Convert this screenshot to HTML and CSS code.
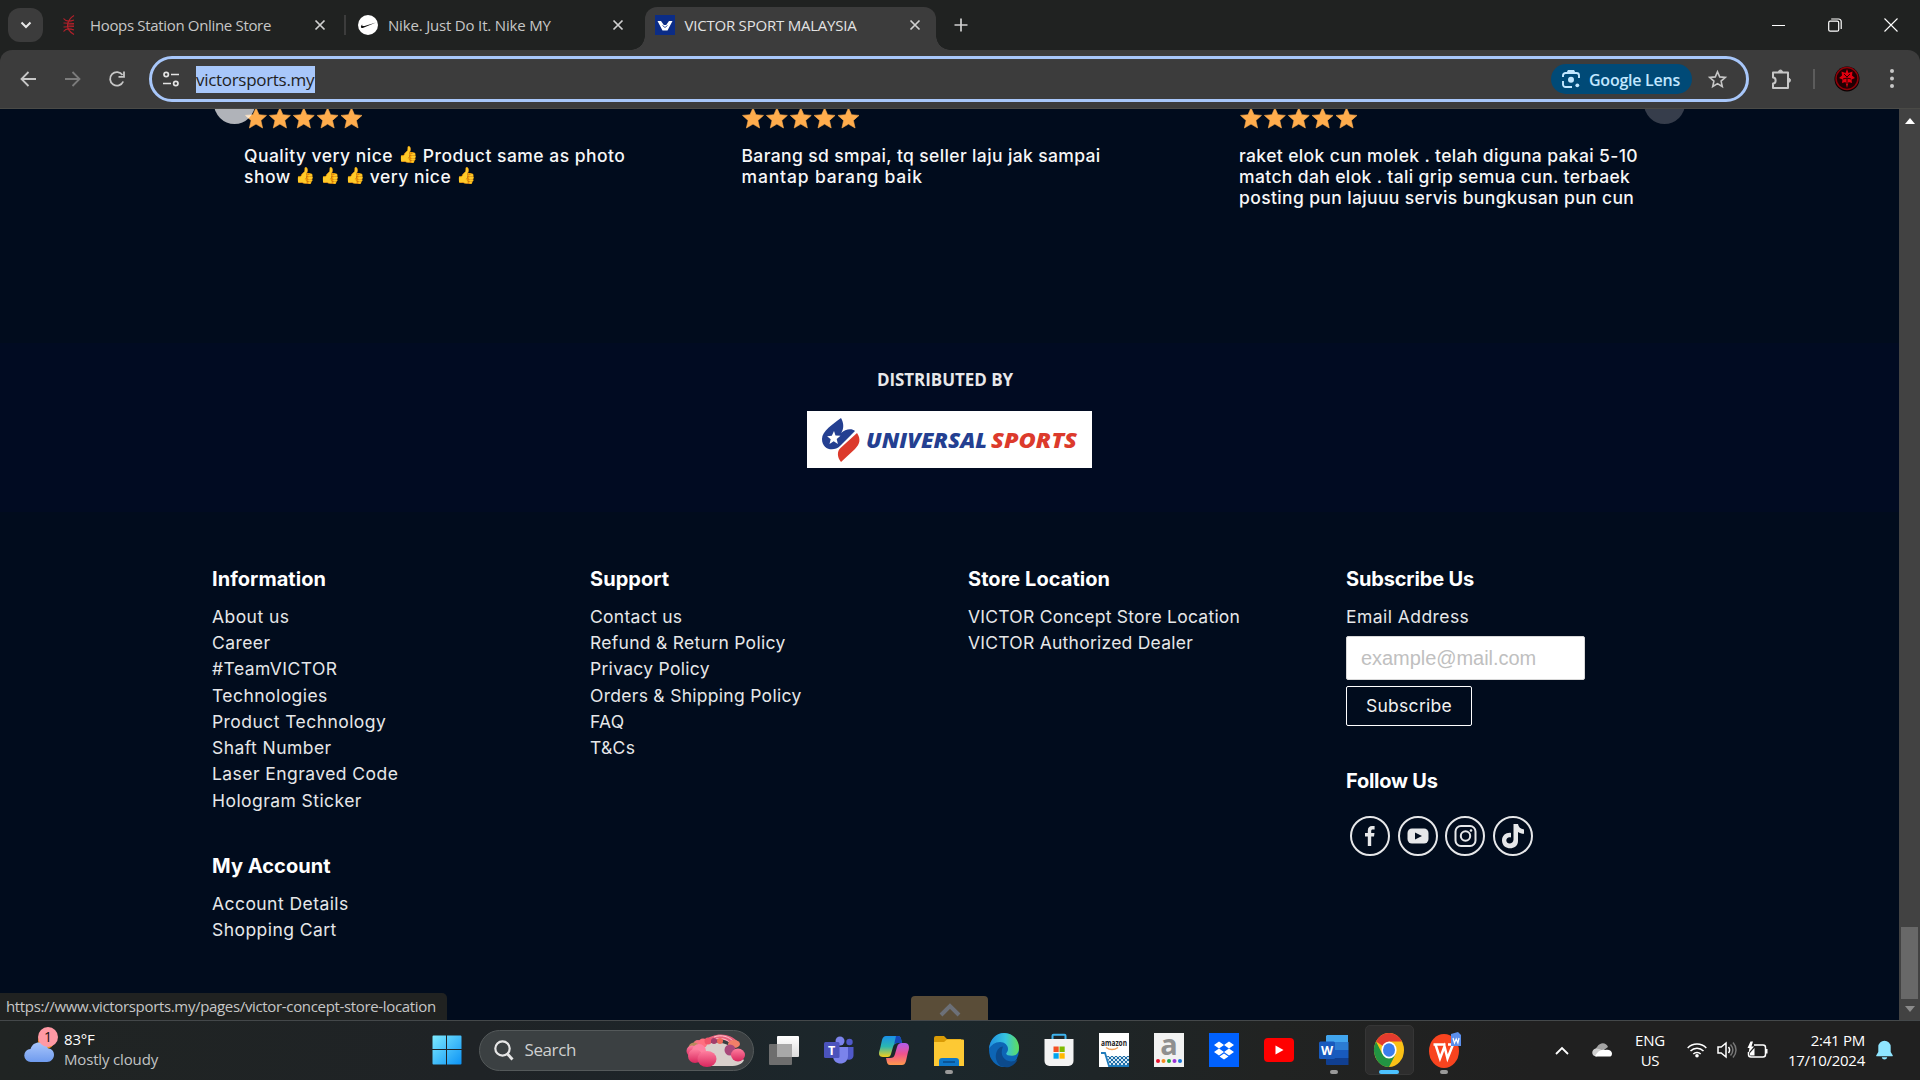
FILE: index.html
```html
<!DOCTYPE html>
<html lang="en">
<head>
<meta charset="utf-8">
<title>VICTOR SPORT MALAYSIA</title>
<link rel="stylesheet" href="styles.css">
</head>
<body>
<svg class="defs" aria-hidden="true">
  <defs>
    <symbol id="star" viewBox="0 0 22 22"><path d="M11 .8l3 6.9 7.5.7-5.6 5 1.7 7.6-6.6-3.9L4.4 21l1.7-7.6-5.6-5L8 7.7z" fill="#ffad4d" stroke="#ffad4d" stroke-width=".6" stroke-linejoin="round"/></symbol>
    <symbol id="stars" viewBox="0 0 118 22"><use href="#star" x="0" width="22" height="22"/><use href="#star" x="23.9" width="22" height="22"/><use href="#star" x="47.8" width="22" height="22"/><use href="#star" x="71.6" width="22" height="22"/><use href="#star" x="95.5" width="22" height="22"/></symbol>
    <symbol id="close" viewBox="0 0 12 12"><path d="M1.5 1.5l9 9m0-9l-9 9" stroke="#d0d0d0" stroke-width="1.7"/></symbol>
  </defs>
</svg>
<div class="screen">
  <header class="tabstrip">
    <button class="tab-search"><svg width="14" height="14" viewBox="0 0 14 14"><path d="M2.5 4.5L7 9l4.500-4.500" fill="none" stroke="#e8e8e8" stroke-width="2"/></svg></button>
    <div class="tab tab-first">
      <svg class="favicon" viewBox="0 0 12 20" fill="none" stroke="#b3202a" stroke-width="1.200"><path d="M11 .5C7 3 5 6 4.500 10S7 17 11 19.500M11 5C6 7 3 7 .5 3.500M11 8.500L.5 8m10.500 3.500l-10.500.5M11 15c-5-2-8-2-10.500 1.500M4 10h7"/></svg>
      <span class="tab-title">Hoops Station Online Store</span>
      <svg class="tab-close"><use href="#close"/></svg>
    </div>
    <div class="tab tab-second">
      <svg class="favicon" viewBox="0 0 20 20"><circle cx="10" cy="10" r="10" fill="#fff"/><path d="M4.200 9.200c-2 2.300-1.800 4.600 1.200 3.500L18 7.500 6.500 11c-1.900.4-2.600-.3-2.300-1.800z" fill="#111"/></svg>
      <span class="tab-title">Nike. Just Do It. Nike MY</span>
      <svg class="tab-close"><use href="#close"/></svg>
    </div>
    <div class="tab tab-active">
      <svg class="favicon" viewBox="0 0 20 20"><path fill="#0b2c86" d="M0 0h20v20H0z"/><path d="M2.500 6H6l2.800 4h2.400L14 6h3.500l-5 9.500h-5z" fill="#fff"/><path d="M7.500 10.500l2.500 2 2.500-2" fill="none" stroke="#0b2c86" stroke-width=".8"/></svg>
      <span class="tab-title">VICTOR SPORT MALAYSIA</span>
      <svg class="tab-close"><use href="#close"/></svg>
    </div>
    <svg class="new-tab" width="14" height="14" viewBox="0 0 14 14"><path d="M7 .5v13M.5 7h13" stroke="#d0d0d0" stroke-width="1.700"/></svg>
    <div class="window-controls">
      <svg width="14" height="14" viewBox="0 0 14 14"><path d="M0 7.500h13" stroke="#fff"/></svg>
      <svg width="14" height="14" viewBox="0 0 14 14" fill="none" stroke="#fff" stroke-width="1.200"><rect x=".7" y="3.200" width="10" height="10" rx="1.500"/><path d="M3.200 1h7.300a2.500 2.500 0 0 1 2.700 2.500V11"/></svg>
      <svg width="14" height="14" viewBox="0 0 14 14"><path d="M.5.5l13 13m0-13l-13 13" stroke="#fff" stroke-width="1.100"/></svg>
    </div>
  </header>
  <nav class="toolbar">
    <div class="nav-buttons">
      <svg width="16" height="16" viewBox="0 0 16 16" fill="none" stroke="#c7c7c7" stroke-width="1.800"><path d="M16 8H2M8.500 1L1.500 8l7 7"/></svg>
      <svg width="16" height="16" viewBox="0 0 16 16" fill="none" stroke="#7c7c7c" stroke-width="1.800"><path d="M0 8h14M7.500 1l7 7-7 7"/></svg>
      <svg width="16" height="16" viewBox="0 0 16 16" fill="none" stroke="#c7c7c7" stroke-width="1.800"><path d="M14.200 10.500A6.800 6.800 0 1 1 13.500 4M15 .5v5.300H9.500"/></svg>
    </div>
    <div class="omnibox">
      <svg class="tune" width="16" height="16" viewBox="0 0 16 16" fill="none" stroke="#e3e3e3" stroke-width="1.700"><circle cx="3.200" cy="3.500" r="2.200"/><path d="M8 3.500h8M0 12.500h8"/><circle cx="12.800" cy="12.500" r="2.200"/></svg>
      <span class="url">victorsports.my</span>
      <div class="lens">
        <svg width="18" height="18" viewBox="0 0 18 18" fill="none" stroke="#c2e7ff" stroke-width="1.900"><path d="M1 7V5.500A2.500 2.500 0 0 1 3.500 3h11A2.500 2.500 0 0 1 17 5.500V8M1 11v3.500A2.500 2.500 0 0 0 3.500 17H10M5.500 3l1-2h5l1 2"/><circle cx="9" cy="9.800" r="3" fill="#c2e7ff" stroke="none"/><circle cx="15.300" cy="15.300" r="1.900" fill="#c2e7ff" stroke="none"/></svg>
        <span>Google Lens</span>
      </div>
      <svg class="bookmark" width="19" height="18" viewBox="0 0 19 18"><path d="M9.500 1.800l2.200 5.100 5.600.5-4.200 3.700 1.200 5.400-4.800-2.900-4.800 2.900 1.200-5.400L1.700 7.400l5.600-.5z" fill="none" stroke="#c7c7c7" stroke-width="1.600"/></svg>
    </div>
    <svg class="extensions" width="21" height="21" viewBox="0 0 21 21"><path d="M2 3.500h15v15.500H2v-4.500c3.500 0 3.500-6 0-6z" fill="none" stroke="#c7c7c7" stroke-width="2" stroke-linejoin="round"/><path d="M7.500 3a2 2 0 0 1 4 0zM17.500 9.300a2 2 0 0 1 0 4z" fill="#c7c7c7" stroke="#c7c7c7"/></svg>
    <span class="toolbar-divider"></span>
    <svg class="avatar" width="26" height="26" viewBox="0 0 26 26"><circle cx="13" cy="13" r="12.500" fill="#0a0002"/><circle cx="13" cy="12.500" r="11" fill="#210003" stroke="#8c0008" stroke-width="1.500"/><path d="M13 3l1.500 4 4-1.500-.5 4 3 2.500-3.500 1.500.5 3.500-3.500-1L13 22l-1.500-6-3.500 1 .5-3.500L5 12l3-2.500-.5-4 4 1.500z" fill="#e0000f"/><path d="M10 8l3 3 3-3M9 13l4-1 4 1M13 12v6" fill="none" stroke="#310003"/></svg>
    <svg class="kebab" width="4" height="20" viewBox="0 0 4 20" fill="#c7c7c7"><circle cx="2" cy="2" r="2"/><circle cx="2" cy="9.500" r="2"/><circle cx="2" cy="17" r="2"/></svg>
  </nav>
  <div class="viewport">
    <main class="page">
      <section class="reviews">
        <article class="review">
          <svg class="rating"><use href="#stars"/></svg>
          <p class="review-emoji">Quality very nice <i>👍</i> Product same as photo<br>show <i>👍</i> <i>👍</i> <i>👍</i> very nice <i>👍</i></p>
        </article>
        <article class="review">
          <svg class="rating"><use href="#stars"/></svg>
          <p>Barang sd smpai, tq seller laju jak sampai<br><span class="spaced">mantap barang baik</span></p>
        </article>
        <article class="review">
          <svg class="rating"><use href="#stars"/></svg>
          <p>raket elok cun molek . telah diguna pakai 5-10<br>match dah elok . tali grip semua cun. terbaek<br>posting pun lajuuu servis bungkusan pun cun</p>
        </article>
        <span class="slide slide-prev"></span>
        <span class="slide slide-next"></span>
      </section>
      <section class="distributor">
        <p>DISTRIBUTED BY</p>
        <svg class="brand" width="285" height="57" viewBox="0 0 285 57">
          <path fill="#fff" d="M0 0h285v57H0z"/>
          <path d="M34 7c3 5 3 11 0 15 4-4 11-5 14-2L33 35c-6 6-18 4-18-7 0-8 11-15 19-21z" fill="#243f91"/>
          <path d="M50 22c4 6 3 11-2 16L34 51c-4-5-4-11-.5-14z" fill="#dc3a2c"/>
          <path d="M27 20l1.500 4.400 5 .3-3.800 3.200 1.200 5-4.200-2.600-4.200 2.800 1.200-4.900-3.600-2.900 4.700-.6z" fill="#fff"/>
          <text class="brand-text" x="59" y="37" textLength="121" lengthAdjust="spacingAndGlyphs" fill="#243f91">UNIVERSAL</text>
          <text class="brand-text" x="184" y="37" textLength="86" lengthAdjust="spacingAndGlyphs" fill="#dc3a2c">SPORTS</text>
        </svg>
      </section>
      <footer class="footer">
        <div class="footer-col">
          <h3>Information</h3>
          <ul><li>About us</li><li>Career</li><li>#TeamVICTOR</li><li>Technologies</li><li>Product Technology</li><li>Shaft Number</li><li>Laser Engraved Code</li><li>Hologram Sticker</li></ul>
          <h3 class="second">My Account</h3>
          <ul><li>Account Details</li><li>Shopping Cart</li></ul>
        </div>
        <div class="footer-col">
          <h3>Support</h3>
          <ul class="policy"><li>Contact us</li><li>Refund &amp; Return Policy</li><li>Privacy Policy</li><li>Orders &amp; Shipping Policy</li><li>FAQ</li><li>T&amp;Cs</li></ul>
        </div>
        <div class="footer-col">
          <h3>Store Location</h3>
          <ul class="tight"><li>VICTOR Concept Store Location</li><li>VICTOR Authorized Dealer</li></ul>
        </div>
        <div class="footer-col">
          <h3 class="close-set">Subscribe Us</h3>
          <label>Email Address</label>
          <input class="email" placeholder="example@mail.com">
          <button class="subscribe">Subscribe</button>
          <h3 class="follow">Follow Us</h3>
          <div class="social">
            <svg viewBox="0 0 40 40"><circle cx="20" cy="20" r="19"/><path d="M17.800 30V20.500H15V17h2.800v-2.500c0-3 1.700-4.500 4.200-4.500h2.600v3.600h-1.800c-1.300 0-1.600.6-1.600 1.600V17h3.300l-.5 3.500h-2.800V30z" class="solid"/></svg>
            <svg viewBox="0 0 40 40"><circle cx="20" cy="20" r="19"/><rect x="9.500" y="12.500" width="21" height="15" rx="4.500" class="solid"/><path d="M17 16.500l7 3.500-7 3.500z" class="hole"/></svg>
            <svg viewBox="0 0 40 40"><circle cx="20" cy="20" r="19"/><rect x="10.500" y="10" width="20" height="20" rx="5.500"/><circle cx="20.500" cy="20" r="4.700"/><circle cx="26" cy="14.500" r="1.300" class="solid"/></svg>
            <svg viewBox="0 0 40 40"><circle cx="20" cy="20" r="19"/><path d="M20.500 8H25c.4 3 2.500 5 6 5.500v4.300c-2.400 0-4.300-.7-6-1.800v9c0 9.500-15.500 10-16-.3 0-5.500 4-8.400 9-7.800v4.600c-3-.6-4.700.8-4.700 3.100.3 4.400 7.200 3.700 7.200-1z" class="solid"/></svg>
          </div>
        </div>
      </footer>
      <div class="to-top"><svg width="22" height="14" viewBox="0 0 22 14"><path d="M2 12l9-9 9 9" fill="none" stroke="#6c7078" stroke-width="4"/></svg></div>
      <div class="status">https://www.victorsports.my/pages/victor-concept-store-location</div>
    </main>
    <aside class="scrollbar">
      <svg width="10" height="6" viewBox="0 0 10 6"><path d="M5 0l5 6H0z" fill="#fff"/></svg>
      <span class="thumb"></span>
      <svg width="10" height="6" viewBox="0 0 10 6"><path d="M5 6l5-6H0z" fill="#8b8b8b"/></svg>
    </aside>
  </div>
  <div class="taskbar">
    <div class="weather">
      <svg width="34" height="38" viewBox="0 0 34 38">
        <defs><linearGradient id="cl" x2="0" y2="1"><stop offset="0" stop-color="#a9c6fb"/><stop offset="1" stop-color="#6f9bee"/></linearGradient></defs>
        <circle cx="22" cy="15" r="8" fill="#f08a1c"/><path d="M7 36a6.500 6.500 0 0 1-.5-13C8 18 12 16 16 16.500c4 .5 7 3 8 6 4 0 6 3 6 6.500S27 36 23 36z" fill="url(#cl)"/><circle cx="24" cy="11" r="10" fill="#ff99a4"/><text x="24" y="16" text-anchor="middle" class="badge-text">1</text></svg>
      <div class="weather-text"><span>83°F</span><span class="dim">Mostly cloudy</span></div>
    </div>
    <div class="dock">
      <div class="cell"><svg width="30" height="30" viewBox="0 0 30 30"><defs><linearGradient id="wn" x2="1" y2="1"><stop offset="0" stop-color="#7deaff"/><stop offset="1" stop-color="#0c93f5"/></linearGradient></defs><path d="M1.500.5h12.500V14H.5V1.500a1 1 0 0 1 1-1zM15 .5h13.500a1 1 0 0 1 1 1V14H15zM.5 15H14v14.500H1.500a1 1 0 0 1-1-1zM15 15h14.500v13.500a1 1 0 0 1-1 1H15z" fill="url(#wn)"/></svg></div>
      <div class="search">
        <svg width="20" height="21" viewBox="0 0 20 21" fill="none" stroke="#e6e6e6" stroke-width="2.200"><circle cx="8.500" cy="8.500" r="7.200"/><path d="M13.500 14l5 5.500" stroke-width="2.800"/></svg>
        <span>Search</span>
        <svg class="flowers" width="60" height="34" viewBox="0 0 60 34">
          <defs><linearGradient id="pk" x2="0" y2="1"><stop offset="0" stop-color="#ff7f9f"/><stop offset="1" stop-color="#d9275e"/></linearGradient></defs>
          <path d="M16 12c14-5 30-3 36 10l6 5c-2 4-6 6-14 6H22z" fill="#d9cfcb"/>
          <path d="M18 8C28-1 44-1 53 10l-6 2C40 5 28 5 20 11z" fill="#e8617c"/><path d="M28 4c8-3 15 0 19 4M26 7c8-3 15-1 18 3" stroke="#ffc3cc" fill="none"/>
          <circle cx="12" cy="12" r="5" fill="#f4747f"/><circle cx="8" cy="15" r="5.500" fill="#b98a5c"/><circle cx="17" cy="10" r="4.500" fill="#ff6f7f"/><circle cx="22" cy="8" r="3.500" fill="#f0556a"/><circle cx="28" cy="8" r="3" fill="#a23d6b"/><circle cx="34" cy="8" r="3" fill="#ee6a58"/><ellipse cx="48" cy="11" rx="6" ry="4" fill="#f27f68"/>
          <circle cx="6" cy="18" r="5.500" fill="url(#pk)"/><circle cx="13" cy="18" r="7" fill="#ff80a0"/><circle cx="9" cy="23" r="7" fill="url(#pk)"/><ellipse cx="21" cy="26" rx="9.500" ry="8" fill="url(#pk)"/><circle cx="44" cy="17" r="5.500" fill="#a9487a"/><ellipse cx="52" cy="22" rx="7" ry="6.500" fill="url(#pk)"/>
        </svg>
      </div>
      <div class="cell"><svg width="30" height="29" viewBox="0 0 30 29"><defs><linearGradient id="tv" x2="0" y2="1"><stop offset="0" stop-color="#fff"/><stop offset="1" stop-color="#dcdcdc"/></linearGradient></defs><rect x="8" width="22" height="21" rx="1" fill="url(#tv)"/><rect y="8" width="23" height="21" rx="1" fill="#6e6e6e"/><path d="M8 8h15v13H8z" fill="#a8a8a8"/></svg></div>
      <div class="cell"><svg width="30" height="28" viewBox="0 0 30 28"><circle cx="16" cy="5" r="4.500" fill="#7b83eb"/><circle cx="25.500" cy="6" r="3.200" fill="#5059c9"/><path d="M20 11h9.500v8c0 6-8 6-9.500 2z" fill="#5059c9"/><path d="M9 11h15v9c0 10-15 10-15 0z" fill="#7b83eb"/><rect y="6" width="15.500" height="16" rx="1.500" fill="#4b53bc"/><text x="7.700" y="18.500" class="glyph" text-anchor="middle">T</text></svg></div>
      <div class="cell"><svg width="30" height="29" viewBox="0 0 30 29"><defs><linearGradient id="c1" x2="0" y2="1"><stop offset="0" stop-color="#1a8fe8"/><stop offset=".5" stop-color="#2bb7b0"/><stop offset="1" stop-color="#f5d01c"/></linearGradient><linearGradient id="c2" x2="0" y2="1"><stop offset="0" stop-color="#b05cf0"/><stop offset=".5" stop-color="#f0528c"/><stop offset="1" stop-color="#ff9a4c"/></linearGradient></defs><path d="M7 0h12c3 0 3 3 4 7h-4c-3 0-4 1-5 4l-2 7c-1 3-2 3-5 3H4c-4 0-5-3-3-8L3 4c1-3 2-4 4-4z" fill="url(#c1)"/><path d="M17 0h2c3 0 3 3 4 7h-4c-2 0-3 0-4 2z" fill="#1546b8"/><path d="M23 29H11c-3 0-3-3-4-7h4c3 0 4-1 5-4l2-7c1-3 2-4 5-4h3c4 0 5 4 3 9l-2 9c-1 3-2 4-4 4z" fill="url(#c2)"/></svg></div>
      <div class="cell running"><svg width="30" height="31" viewBox="0 0 30 31"><path d="M0 3a2 2 0 0 1 2-2h8l3 3H27l1 3H0z" fill="#d99b06"/><path d="M0 7h10l3-2.500h16a1 1 0 0 1 1 1V31H0z" fill="#fdc934"/><path d="M5 31v-5a3 3 0 0 1 3-3h14a3 3 0 0 1 3 3v5z" fill="#0f78c9"/><path d="M9 27h12" stroke="#0a4a86" stroke-width="1.500"/></svg></div>
      <div class="cell"><svg width="30" height="34" viewBox="0 0 30 30" preserveAspectRatio="none"><defs><linearGradient id="e1" x2="1"><stop offset="0" stop-color="#1f8fe0"/><stop offset=".55" stop-color="#36c3e0"/><stop offset="1" stop-color="#5fdf5a"/></linearGradient></defs><circle cx="15" cy="15" r="15" fill="#0d65b5"/><path d="M0 14C1 5 8 0 15 0c9 0 15 6 15 13 0 5-3 7-7 7-5 0-7-1-5-3 3-4-1-9-7-9-5 0-9 3-11 6z" fill="url(#e1)"/><path d="M11 29C3 22 8 12 14 12c-4 8 2 14 10 13 2-.3 3-1 4.500-1.500C24 31 17 31 11 29z" fill="#0c4a8c"/></svg></div>
      <div class="cell"><svg width="30" height="34" viewBox="0 0 30 34"><path d="M8.500 8V2.800a1 1 0 0 1 1-1h11a1 1 0 0 1 1 1V8" fill="none" stroke="#3fb4ee" stroke-width="2"/><path d="M.5 6h29v22a5 5 0 0 1-5 5h-19a5 5 0 0 1-5-5z" fill="#f3f3f3"/><path d="M9.500 13.500h5.200v5.500H9.500z" fill="#f25022"/><path d="M15.500 13.500h5.200v5.500h-5.200z" fill="#7fba00"/><path d="M9.500 20.200h5.200v5.500H9.500z" fill="#00a4ef"/><path d="M15.500 20.200h5.200v5.500h-5.200z" fill="#ffb900"/></svg></div>
      <div class="cell"><svg width="30" height="34" viewBox="0 0 30 34"><defs><pattern id="ck" width="4" height="4" patternUnits="userSpaceOnUse"><path fill="#1f6da6" d="M0 0h4v4H0z"/><path fill="#d3e6f2" d="M0 0h2v2H0zM2 2h2v2H2z"/></pattern></defs><path fill="#fff" d="M0 0h30v34H0z"/><text x="2" y="13" class="amz" textLength="26" lengthAdjust="spacingAndGlyphs">amazon</text><path d="M7 14.500c4 2.800 8 2.800 12 0" fill="none" stroke="#f2a057" stroke-width="1.500"/><path d="M8 23h22v9H11z" fill="url(#ck)"/><path d="M2 20h4l4 13h20" fill="none" stroke="#1f7cbc" stroke-width="1.800"/></svg></div>
      <div class="cell"><svg width="30" height="34" viewBox="0 0 30 34"><path fill="#f2f2f2" d="M0 0h30v34H0z"/><text x="15" y="22" text-anchor="middle" class="big-a">a</text><g><circle cx="4" cy="28" r="2" fill="#e8112d"/><circle cx="9.500" cy="28" r="2" fill="#f58a1f"/><circle cx="15" cy="28" r="2" fill="#1ba84a"/><circle cx="20.500" cy="28" r="2" fill="#9b30d9"/><circle cx="26" cy="28" r="2" fill="#1878d8"/></g></svg></div>
      <div class="cell"><svg width="30" height="34" viewBox="0 0 30 34"><path fill="#0061fe" d="M0 0h30v34H0z"/><path d="M10 8.500l5 3.500-5 3.500L5 12zM20 8.500l5 3.500-5 3.500-5-3.500zM10 15.500l5 3.500-5 3.500L5 19zM20 15.500l5 3.500-5 3.500-5-3.500zM15 20.500l4.500 3-4.500 3-4.500-3z" fill="#fff"/></svg></div>
      <div class="cell"><svg width="30" height="24" viewBox="0 0 30 24"><rect width="30" height="24" rx="4" fill="#f00"/><path d="M11.500 7.500l8 4.500-8 4.500z" fill="#fff"/></svg></div>
      <div class="cell running"><svg width="30" height="32" viewBox="0 0 30 32"><path d="M8 1h21v8H7V2z" fill="#41a5ee"/><path d="M7 8h22.500v8H7z" fill="#2b7cd3"/><path d="M7 16h22.500v8H7z" fill="#185abd"/><path d="M7 24h22.500v7H8a1 1 0 0 1-1-1z" fill="#103f91"/><rect y="7.500" width="16" height="17.500" rx="1.500" fill="#185abd"/><text x="8" y="21" text-anchor="middle" class="glyph">W</text></svg></div>
      <div class="cell focused"><svg width="30" height="34" viewBox="0 0 30 30" preserveAspectRatio="none"><circle cx="15" cy="15" r="15" fill="#fbc116"/><path d="M15 15L2 7.500A15 15 0 0 1 28 7.500H15z" fill="#e33b2e"/><path d="M2 7.500A15 15 0 0 0 15 30l6.500-11.300L8.500 18.700z" fill="#229342"/><circle cx="15" cy="15" r="7.600" fill="#fff"/><circle cx="15" cy="15" r="6" fill="#3b7ded"/></svg></div>
      <div class="cell running"><svg class="wps" width="34" height="36" viewBox="0 0 34 36"><ellipse cx="16" cy="19" rx="15" ry="17" fill="#f8441f"/><path d="M5.500 12.500h12M7.500 12.500l4.500 14 4.500-12 3 12 5.500-14h-5" fill="none" stroke="#fff" stroke-width="2.500"/><path d="M23 2l7-2 3 3v11H23z" fill="#5b8fec"/><path d="M25 6l1.500 5 1.700-4 1.700 4L31 6" fill="none" stroke="#fff" stroke-width="1.200"/></svg></div>
    </div>
    <div class="tray">
      <svg class="tray-up" width="14" height="9" viewBox="0 0 14 9"><path d="M1 8l6-6 6 6" fill="none" stroke="#fff" stroke-width="1.800"/></svg>
      <svg class="tray-cloud" width="20" height="14" viewBox="0 0 20 14"><path d="M5 12a5 5 0 0 1 0-8c3-5 9-5 11 0z" fill="#a3a3a3"/><path d="M4 13.500c-5-.5-5-7 0-8 5 0 7 3 9 5z" fill="#cfcfcf"/><path d="M3 13c3-5 6-7 10-6 3-1 7 0 7 3.500S18 13.500 16 13.500H4z" fill="#fff"/></svg>
      <div class="lang"><span>ENG</span><span>US</span></div>
      <svg class="tray-wifi" width="20" height="16" viewBox="0 0 20 16" fill="none" stroke="#fff" stroke-width="1.500"><path d="M.7 6a13 13 0 0 1 18.600 0M3.500 9a9 9 0 0 1 13 0M6.300 12a5.200 5.200 0 0 1 7.400 0"/><circle cx="10" cy="13.700" r="1.800" fill="#fff" stroke="none"/></svg>
      <svg class="tray-volume" width="20" height="18" viewBox="0 0 20 18" fill="none" stroke="#fff" stroke-width="1.500"><path d="M1 6v6h3.200L9 16V2L4.200 6z"/><path d="M11.500 6c1.500 2 1.500 4 0 6"/><path d="M13.500 3.500c3 3.500 3 7.500 0 11M16 1.500c4 4.500 4 10.500 0 15" stroke="#777"/></svg>
      <svg class="tray-battery" width="21" height="18" viewBox="0 0 21 18"><path d="M7 4h9a2.500 2.500 0 0 1 2.500 2.500v7A2.500 2.500 0 0 1 16 16H4a2.500 2.500 0 0 1-2.500-2.500V11" fill="none" stroke="#fff" stroke-width="1.500"/><path d="M19 8h1.500v4.500H19zM3 14.500h4.500V7L3 12zM3.500.5L.5 7h2l-1 5L7 5.500H4.500l1.500-5z" fill="#fff"/></svg>
      <div class="clock"><span>2:41 PM</span><span>17/10/2024</span></div>
      <svg class="tray-bell" width="17" height="20" viewBox="0 0 17 20" fill="#8fe5ff"><path d="M2.300 7a6.200 6.200 0 0 1 12.400 0v5l2 3.200c.3.600 0 1-.6 1H.9c-.6 0-.9-.4-.6-1l2-3.200zM5.800 17.200h5.400c-.5 3-4.900 3-5.400 0z"/></svg>
    </div>
  </div>
</div>
</body>
</html>
```
FILE: styles.css
```css
* { box-sizing: border-box; }
body { margin: 0; background: #202221; font-family: "Open Sans", "Noto Sans", sans-serif; }
h3, p, ul { margin: 0; padding: 0; }
ul { list-style: none; }
svg { display: block; flex: none; overflow: visible; }
.defs { position: absolute; width: 0; height: 0; }
.screen { width: 1920px; height: 1080px; overflow: hidden; display: flex; flex-direction: column; }

/* tab strip */
.tabstrip { height: 50px; flex: none; display: flex; align-items: center; padding-left: 8px; background: #202221; }
.tab-search { width: 35px; height: 34px; border: 0; border-radius: 12px; background: #3c3c3c; display: flex; align-items: center; justify-content: center; padding: 0; }
.tab { flex: none; display: flex; align-items: center; height: 20px; font-size: 15px; letter-spacing: -.33px; line-height: 22px; color: #c7c7c7; }
.favicon { width: 20px; height: 20px; margin-right: 10px; }
.tab-title { flex: 1; white-space: nowrap; }
.tab-close { width: 12px; height: 12px; }
.tab-first { width: 283px; padding-right: 18px; margin-left: 20px; border-right: 2px solid #3c3c3c; }
.tab-first .favicon { width: 12px; margin-right: 15px; }
.tab-second { width: 266px; margin-left: 12px; letter-spacing: -.18px; }
.tab-active { position: relative; width: 291px; height: 43px; margin: 7px 0 0 20.500px; padding: 0 15px 7px 10px; border-radius: 12px 12px 0 0; background: #3c3c3c; letter-spacing: -.22px; color: #e3e3e3; }
.tab-active::before, .tab-active::after { content: ""; position: absolute; bottom: 0; width: 14px; height: 14px; }
.tab-active::before { left: -14px; background: radial-gradient(circle at 0 0, transparent 13.5px, #3c3c3c 14px); }
.tab-active::after { right: -14px; background: radial-gradient(circle at 100% 0, transparent 13.5px, #3c3c3c 14px); }
.new-tab { margin-left: 18px; }
.window-controls { display: flex; gap: 42px; margin: 0 22px 0 auto; }

/* toolbar */
.toolbar { height: 59px; flex: none; display: flex; align-items: center; background: #3c3c3c; border-bottom: 1px solid #4a4a46; border-radius: 12px 12px 0 0; padding: 0 26px 0 20px; }
.nav-buttons { display: flex; gap: 28.500px; width: 129px; }
.omnibox { width: 1600px; height: 46px; border: 3px solid #a8c7fa; border-radius: 23px; display: flex; align-items: center; padding: 0 19px 0 11px; }
.url { margin-left: 17px; background: #a8c7fa; color: #1f1f1f; font-size: 17px; letter-spacing: -.3px; line-height: 27px; padding: 0 1px 0 0; }
.lens { margin-left: auto; width: 141px; height: 30px; border-radius: 15px; background: #004a77; color: #c2e7ff; display: flex; align-items: center; gap: 9px; padding-left: 11px; font-size: 16px; font-weight: 600; letter-spacing: -.25px; white-space: nowrap; }
.lens span { padding-top: 1px; }
.bookmark { margin-left: 16px; }
.extensions { margin-left: 22px; }
.toolbar-divider { width: 2px; height: 20px; background: #5c5c5c; margin: 0 19px 0 21px; }
.kebab { margin-left: auto; }

/* page */
.viewport { height: 911px; flex: none; display: flex; }
.page { position: relative; width: 1899px; overflow: hidden; background: #010c1d; color: #fff; font-family: Inter, "Open Sans", sans-serif; }
.reviews { position: relative; height: 234px; display: grid; grid-template-columns: repeat(3, 497.500px); padding-left: 244px; }
.review p { margin-top: 16px; font-size: 17.500px; font-weight: 500; line-height: 21px; letter-spacing: .37px; color: #f7f7f7; white-space: nowrap; }
.review .review-emoji { letter-spacing: .48px; }
.review i { display: inline-block; width: 19.500px; font: 16px/20px "Noto Color Emoji", sans-serif; letter-spacing: 0; vertical-align: top; }
.review .spaced { letter-spacing: .85px; }
.rating { width: 118px; height: 22px; margin: -2px 0 0 .500px; }
.slide { position: absolute; top: -26px; width: 41px; height: 41px; border-radius: 50%; }
.slide-prev { left: 214px; background: rgba(255, 255, 255, .69); }
.slide-next { left: 1644px; background: #363d4b; }
.distributor { height: 169px; background: #010b22; display: flex; flex-direction: column; align-items: center; padding-top: 25px; }
.distributor p { font: 700 17px/24px "Open Sans", sans-serif; letter-spacing: -.05px; color: #e8e8ea; margin: 0 9px 19px 0; }
.brand-text { font: italic 800 21.500px "Open Sans", sans-serif; }
.footer { display: grid; grid-template-columns: repeat(4, 378px); padding: 51.700px 0 0 212px; }
.footer h3 { font-size: 20px; line-height: 30px; font-weight: 700; letter-spacing: .05px; margin-bottom: 10px; }
.footer li, .footer label { display: block; font-size: 17.500px; line-height: 26.300px; letter-spacing: .44px; color: #e6e7e9; white-space: nowrap; }
.footer .policy li { letter-spacing: .29px; }
.footer .tight li { letter-spacing: .25px; }
.footer h3.close-set { letter-spacing: -.15px; }
.footer h3.second { margin-top: 37px; }
.email { display: block; width: 239px; height: 44px; margin: 6px 0; padding: 1px 14px 0; border: 1px solid #d8d8d8; border-radius: 2px; background: #fff; font: 20px "Liberation Sans", sans-serif; letter-spacing: -.05px; }
.email::placeholder { color: #c0c0c0; }
.subscribe { display: block; width: 126px; height: 40px; padding: 0; border: 1.500px solid #fff; border-radius: 2px; background: none; color: #f2f2f2; font: 17.500px Inter, sans-serif; letter-spacing: .3px; }
.footer h3.follow { margin: 39.700px 0 20px; letter-spacing: -.25px; }
.social { display: flex; gap: 7.700px; padding-left: 4px; }
.social svg { width: 40px; height: 40px; fill: none; stroke: #e6e7e9; stroke-width: 2; }
.social .solid { fill: #e6e7e9; stroke: none; }
.social .hole { fill: #010c1d; stroke: none; }
.to-top { position: absolute; left: 911px; bottom: 0; width: 77px; height: 24px; border-radius: 4px 4px 0 0; background: #5a4d38; display: flex; justify-content: center; padding-top: 7px; }
.status { position: absolute; left: 0; bottom: 0; width: 447px; height: 27px; border-radius: 0 5px 0 0; background: #202221; color: #c7c7c7; font: 15px/27px "Open Sans", sans-serif; letter-spacing: -.34px; padding-left: 6px; white-space: nowrap; }
.scrollbar { width: 21px; background: #424242; display: flex; flex-direction: column; align-items: center; padding: 9px 0 8px; }
.thumb { width: 17px; height: 72px; background: #686868; margin: auto 0 7px; }

/* taskbar */
.taskbar { height: 60px; display: flex; border-top: 1px solid #44484a; background: linear-gradient(90deg, #202423, #1f2326 25%, #1b272c 48%, #212322 66%, #202020 80%); color: #fff; font-size: 15px; line-height: 20px; }
.weather { display: flex; width: 419.500px; padding: 5px 0 0 24px; }
.weather-text { display: flex; flex-direction: column; margin-left: 6px; letter-spacing: -.16px; padding-top: 3px; }
.dim { color: #c2c3c4; }
.badge-text { font: 14px "Open Sans", sans-serif; fill: #111; }
.dock { display: flex; align-items: center; height: 58px; }
.cell { position: relative; width: 55px; height: 50px; display: flex; align-items: center; justify-content: center; }
.cell::after { position: absolute; bottom: 1px; height: 4px; border-radius: 2px; }
.running::after { content: ""; width: 8px; background: #9a9a9a; }
.focused { width: 49px; margin: 0 3px; background: #2d2d2d; border: 1px solid #363636; border-radius: 5px; }
.focused::after { content: ""; width: 20px; bottom: 0; background: #4cc2ff; }
.wps { margin-left: 2px; }
.search { width: 275px; height: 41px; margin: 0 3px 0 4px; border: 1px solid #54595a; border-radius: 21px; background: #3b4042; display: flex; align-items: center; padding: 0 7px 0 14px; font-size: 17px; letter-spacing: -.4px; color: #cfd0d0; }
.search span { margin-left: 11px; }
.flowers { margin-left: auto; }
.glyph { font: 700 12.500px "Open Sans", sans-serif; fill: #fff; }
.amz { font: 700 9px "Open Sans", sans-serif; fill: #222; }
.big-a { font: 700 29px "Open Sans", sans-serif; fill: #8f8f8f; }
.tray { display: flex; align-items: center; height: 58px; margin-left: auto; padding-right: 27px; }
.tray-up { margin-right: 23px; }
.lang, .clock { display: flex; flex-direction: column; align-items: center; letter-spacing: -.26px; }
.lang { margin: 0 22px 0 23px; width: 30px; }
.tray-volume, .tray-battery { margin-left: 10px; }
.clock { width: 97px; align-items: flex-end; }
.tray-bell { margin-left: 11px; }
```
